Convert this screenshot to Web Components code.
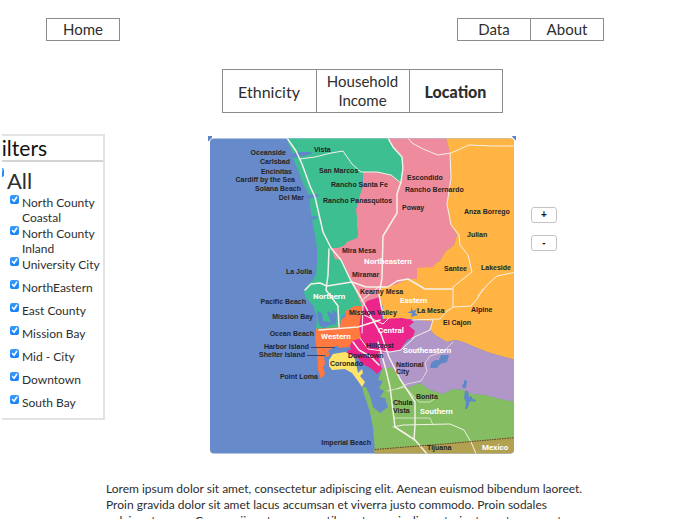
<!DOCTYPE html>
<html lang="en">
<head>
<meta charset="utf-8">
<title>San Diego County - Location</title>
<style>
  body { margin: 0; background: #fff; color: #2e2e2e; font: 12px/16px Lato, "Open Sans", sans-serif; }
</style>
</head>
<body>
<county-app></county-app>

<template id="app-tpl">
  <style>
    :host { display: block; box-sizing: border-box; height: 100vh; overflow: hidden; border-bottom: 2px solid #fff; }
    header { display: flex; justify-content: space-between; padding: 18px 82px 0 46px; }
    .views { display: flex; justify-content: center; padding: 28px 0 0 38px; }
    main { display: grid; grid-template-columns: 11fr minmax(0, 308px) 9fr; align-items: start; padding-top: 21px; }
    region-filters { justify-self: start; }
    p { margin: 0; padding: 27px 96px 0 106px; font-size: 12px; line-height: 16px; }
  </style>
  <header>
    <link-bar label="Start"><a href="#home">Home</a></link-bar>
    <link-bar label="Pages"><a href="#data">Data</a><a href="#about">About</a></link-bar>
  </header>
  <div class="views"><view-tabs></view-tabs></div>
  <main>
    <region-filters></region-filters>
    <county-map></county-map>
    <zoom-controls></zoom-controls>
  </main>
  <p>Lorem ipsum dolor sit amet, consectetur adipiscing elit. Aenean euismod bibendum laoreet. Proin gravida dolor sit amet lacus accumsan et viverra justo commodo. Proin sodales pulvinar tempor. Cum sociis natoque penatibus et magnis dis parturient montes, nascetur ridiculus mus.</p>
</template>

<template id="bar-tpl">
  <style>
    :host { display: block; }
    nav { display: flex; border: 1px solid #8c8c8c; }
    ::slotted(a) { box-sizing: border-box; width: 72px; font-size: 15px; line-height: 21px; text-align: center; color: #2e2e2e; text-decoration: none; }
    ::slotted(a:not(:first-child)) { width: 73px; border-left: 1px solid #8c8c8c; }
  </style>
  <nav><slot></slot></nav>
</template>

<template id="tabs-tpl">
  <style>
    :host { display: block; }
    div { display: grid; grid-template-columns: repeat(3, 93px); border: 1px solid #8c8c8c; }
    button { margin: 0; padding: 0; border: 0; background: none; color: #2e2e2e; font: 16px/19px Lato, sans-serif; min-height: 42px; }
    button + button { border-left: 1px solid #8c8c8c; }
    .two { font-size: 15px; }
    [aria-selected=true] { font-weight: 900; }
  </style>
  <div role="tablist">
    <button role="tab" aria-selected="false">Ethnicity</button>
    <button role="tab" aria-selected="false" class="two">Household Income</button>
    <button role="tab" aria-selected="true">Location</button>
  </div>
</template>

<template id="check-tpl">
  <style>
    :host { display: block; min-height: 23px; }
    label { display: flex; align-items: flex-start; gap: 3px; line-height: 15px; padding-bottom: 1px; }
    input { appearance: none; flex: none; position: relative; width: 9px; height: 9px; margin: 0; border-radius: 2px; background: #ccc; }
    input:checked { background: linear-gradient(#3b9bfb, #1580f5); }
    input:checked::after { content: ""; position: absolute; inset: 1px; background: #fff; clip-path: polygon(8% 52%, 24% 36%, 42% 56%, 76% 4%, 96% 18%, 46% 94%); }
    :host([big]) label { font-size: 22px; line-height: 26px; }
  </style>
  <label><input type="checkbox" checked><span><slot></slot></span></label>
</template>

<template id="filters-tpl">
  <style>
    :host { display: block; padding-left: 2px; }
    section { overflow: hidden; width: 103px; box-sizing: border-box; border: 2px solid #e3e3e3; border-left: 0; }
    h2 { margin: 0 0 6px -13px; padding-left: 1px; font-size: 21px; font-weight: 400; line-height: 24px; color: #111; border-bottom: 2px solid #d4d4d4; }
    check-item { margin-left: 8px; }
    check-item[big] { margin-left: -7px; }
  </style>
  <section>
    <h2>Filters</h2>
    <check-item big>All</check-item>
    <check-item>North County Coastal</check-item>
    <check-item>North County Inland</check-item>
    <check-item>University City</check-item>
    <check-item>NorthEastern</check-item>
    <check-item>East County</check-item>
    <check-item>Mission Bay</check-item>
    <check-item>Mid - City</check-item>
    <check-item>Downtown</check-item>
    <check-item>South Bay</check-item>
  </section>
</template>

<template id="zoom-tpl">
  <style>
    :host { display: flex; flex-direction: column; gap: 12px; padding: 73px 0 0 15px; }
    button { width: 26px; height: 16px; box-sizing: border-box; padding: 0; border: 1px solid #c4c4c4; border-radius: 3px; background: #fff; color: #111; font: bold 10px/12px "Liberation Sans", sans-serif; }
  </style>
  <button aria-label="Zoom in">+</button>
  <button aria-label="Zoom out">-</button>
</template>

<template id="map-tpl">
  <style>
    :host { display: block; padding-top: 2px; }
    svg { display: block; width: 100%; }
    text { font: bold 7px "Liberation Sans", sans-serif; fill: #262324; }
    .e { text-anchor: end; }
    .r { font: bold 8px Roboto, sans-serif; fill: #fff; }
    .road path { fill: none; stroke: #f4f1e8; stroke-linejoin: round; stroke-linecap: round; }
  </style>
  <svg viewBox="208 136 308 318" role="img" aria-label="Map of San Diego County regions">
    <defs><clipPath id="card"><rect x="210" y="138.500" width="304" height="315" rx="4"/></clipPath></defs>
    <path d="M208 136h4v2q-2 1-3 3h-1zM516 136h-4l1 2q2 1 3 3z" fill="#5f83c6"/>
    <g clip-path="url(#card)">
      <path fill="#678aca" d="M208 136h308v320H208z"/>
      <path fill="#3ebf91" d="M287 138 289 145 292 151 293 158 298 170 303 183 309 195 311 213 314 230 317 247 317 263 316 275 312 281 306 287 304 293 306 298 313 305 317 317 316 330H340L341 318 346 312 363 306 384 287 352 262 346 243 357 238 358 220 356 208 361 197 363 172 402 184 404 165 402 156 388 138z"/>
      <path fill="#ee8c9d" d="M388 138 393 147 402 156 404 165 401 183 390 175 377 172 363 172 363 186 360 195 359 199 356 210 357 217 357 227 358 233 357 238 347 242 345 245 338 248 331 248 335 259 342 260 352 282 362 306 375 303 382 290 396 286 408 279 417 279V268H433L436 263 440 261 445 252 454 245 457 235 451 225 447 205 451 180 450 153 446 138z"/>
      <path fill="#ffb443" d="M446 138 450 153 451 180 447 205 451 225 457 235 454 245 445 252 440 261 436 263 433 267 417 268V279H408L395 285 380 287 379 298 383 307 383 319H412L423 321 433 321 429 329 435 335 447 342 455 340 463 342 477 348 490 353 516 360V138z"/>
      <path fill="#b196c8" d="M406 326 412 320 433 321 429 329 435 335 447 342 455 340 463 342 477 348 490 353 516 360V402L500 399 485 395 472 394 463 390 453 389 443 394 430 390 420 383 407 388 393 373 382 371 378 353 398 350 413 337z"/>
      <path fill="#84bd62" d="M382 369 392 367 407 388 420 383 430 390 443 394 453 389 463 390 472 394 485 395 500 399 516 402V444L375 452 373 428 370 412 364 394 362 387 366 387 370 396 373 407 380 413 388 407 385 398 380 397 384 391 379 388 383 381 378 380z"/>
      <path fill="#b3a152" d="M374 449 450 443 516 437V456H375z"/>
      <path fill="#ff7940" d="M316 329 340 327 341 320 346 316 345 311 350 309 354 306 363 306 363 338 354 341 349 346 335 346 328 351 324 357 325 364 323 367 325 374 321 379 318 370 317 353 315 337z"/>
      <path fill="#ec258a" d="M362 308 367 301 380 297 382 319 402 318 412 320 414 322 409 326 415 331 413 337 407 340 400 350 387 352 378 353 380 363 382 369 377 374 373 370 367 366 363 365 358 358 348 358 347 353 352 341 361 338 359 327z"/>
      <path fill="#ffe469" d="M329 360 333 354 345 352 354 356 356 364 358 373 362 369 363 373 360 376 365 382 362 387 358 381 352 373 345 369 332 370 329 366z"/>
      <g fill="#5f88c8">
        <path d="M290 154 300 152 311 152 312 154 304 156 294 158zM307 195 315 194 320 195 317 197 309 199zM309 217 318 216 316 219 310 220zM317 311 322 313 323 321 331 322 328 315 327 311 334 314 331 309 337 313 336 324 330 325 324 328 319 325z"/>
        <path d="M430 368 431 363 435 360 439 360 441 355 449 355 447 362 440 364 437 368z"/>
        <path d="M464 380 467 381 466 388 463 388 462 385 464 384zM465 391 468 391 469 397 471 396 473 399 476 400 475 402 470 401 469 405 467 409 465 409 466 402 464 398z"/>
        <path d="m411 307 2 4 4-2-2 4 3 2-4 1-3 1 1-4-5 0 4-2zM324 356 330 350 338 347 350 347 351 350 336 350 330 354 327 359z"/>
      </g>
      <path fill="#ff7940" d="m326 354 4-3-1 5-3 1zM335 345 350 345 350 347 340 348z"/>
      <g class="road">
        <g stroke-width="1.500">
          <path d="M287 138 296 151 302 164 310 186 315 197 318 210 323 232 331 248 341 260 351 281 361 298 370 315 381 334 389 357 400 379 415 402 415 425 414 440M329 249 328 275 326 290 338 306 339 327M380 320 358 327 319 330M378 342 386 370 390 387 395 427 415 440 427 454M353 342 359 350 371 357 379 365"/>
          <path d="M388 138 393 147 402 157 403 168 401 182 397 194 397 213 383 236 382 278 379 295 383 315"/>
          <path d="M305 290 311 284 320 283 327 286 352 282 366 287 388 287 397 281 408 279 425 289 452 289"/>
        </g>
        <g stroke-width="1">
          <path d="M300 159 315 157 331 153 343 151 352 164 361 172 377 172 391 175 401 183M408 138 412 143 423 149 438 155 451 153 469 145 491 146 516 146M450 153 451 178 447 204 451 225 459 235 460 245 468 255 472 272 453 287 453 307 471 306 477 299 483 289M478 296 488 284 497 276 516 272M453 307 446 312 440 319 412 320M389 318 383 324 360 313M412 338 430 330 433 320M360 338 368 349 390 352 401 350 414 338M363 305 362 333"/>
          <path stroke-width=".7" d="M453 342 443 352 430 356 425 363 427 371 421 381 407 384 397 389M387 391 405 387 419 402 430 402 437 397M394 418H430L433 425"/>
          <path d="M393 427 403 425 450 424 464 430 471 442 477 456M361 301 380 286"/>
        </g>
      </g>
      <path d="M375 449.500 450 443.500 516 437.500" fill="none" stroke="#51452d" stroke-dasharray="1.500 1"/>
      <path d="M311 347.500h24M307 355.500h18" stroke="#263352" stroke-width=".8"/>
      <text class="e" x="286" y="155">Oceanside</text><text class="e" x="290" y="164">Carlsbad</text><text class="e" x="292" y="174">Encinitas</text><text class="e" x="295" y="182">Cardiff by the Sea</text><text class="e" x="301" y="191">Solana Beach</text><text class="e" x="304" y="200">Del Mar</text>
      <text x="314" y="152">Vista</text><text x="319" y="173">San Marcos</text><text x="331" y="187">Rancho Santa Fe</text><text x="323" y="203">Rancho Panasquitos</text>
      <text x="407" y="180">Escondido</text><text x="405" y="192">Rancho Bernardo</text><text x="402" y="210">Poway</text><text x="464" y="214">Anza Borrego</text><text x="467" y="237">Julian</text><text x="444" y="271">Santee</text><text x="481" y="270">Lakeside</text>
      <text x="342" y="253">Mira Mesa</text><text x="352" y="277">Miramar</text><text x="360" y="294">Kearny Mesa</text><text x="286" y="274">La Jolla</text>
      <text class="e" x="306" y="304">Pacific Beach</text><text class="e" x="313" y="319">Mission Bay</text><text class="e" x="314" y="336">Ocean Beach</text><text class="e" x="309" y="349">Harbor Island</text><text class="e" x="305" y="357">Shelter Island</text><text class="e" x="318" y="379">Point Loma</text><text class="e" x="371" y="445">Imperial Beach</text>
      <text x="349" y="315">Mission Valley</text><text x="417" y="313">La Mesa</text><text x="471" y="312">Alpine</text><text x="443" y="325">El Cajon</text><text x="366" y="348">Hillcrest</text><text x="348" y="358">Downtown</text><text x="330" y="366">Coronado</text>
      <text x="396" y="367">National</text><text x="396" y="374">City</text><text x="393" y="405">Chula</text><text x="393" y="413">Vista</text><text x="416" y="399">Bonita</text><text x="427" y="450">Tijuana</text>
      <text class="r" x="364" y="264">Northeastern</text><text class="r" x="313" y="299">Northern</text><text class="r" x="400" y="303">Eastern</text><text class="r" x="378" y="333">Central</text><text class="r" x="321" y="339">Western</text><text class="r" x="403" y="353">Southeastern</text><text class="r" x="420" y="414">Southern</text><text class="r" x="482" y="450">Mexico</text>
    </g>
  </svg>
</template>

<script>
  const define = (name, templateId, setup) => customElements.define(name, class extends HTMLElement {
    constructor() {
      super();
      this.attachShadow({ mode: "open" }).append(document.getElementById(templateId).content.cloneNode(true));
      if (setup) setup(this.shadowRoot, this);
    }
  });
  define("link-bar", "bar-tpl", (root, host) => root.querySelector("nav").setAttribute("aria-label", host.getAttribute("label") || "Links"));
  define("view-tabs", "tabs-tpl", root => {
    const tabs = root.querySelectorAll("button");
    tabs.forEach(tab => tab.addEventListener("click", () => tabs.forEach(t => t.setAttribute("aria-selected", t === tab))));
  });
  define("check-item", "check-tpl");
  define("region-filters", "filters-tpl");
  define("zoom-controls", "zoom-tpl");
  define("county-map", "map-tpl");
  define("county-app", "app-tpl");
</script>
</body>
</html>
